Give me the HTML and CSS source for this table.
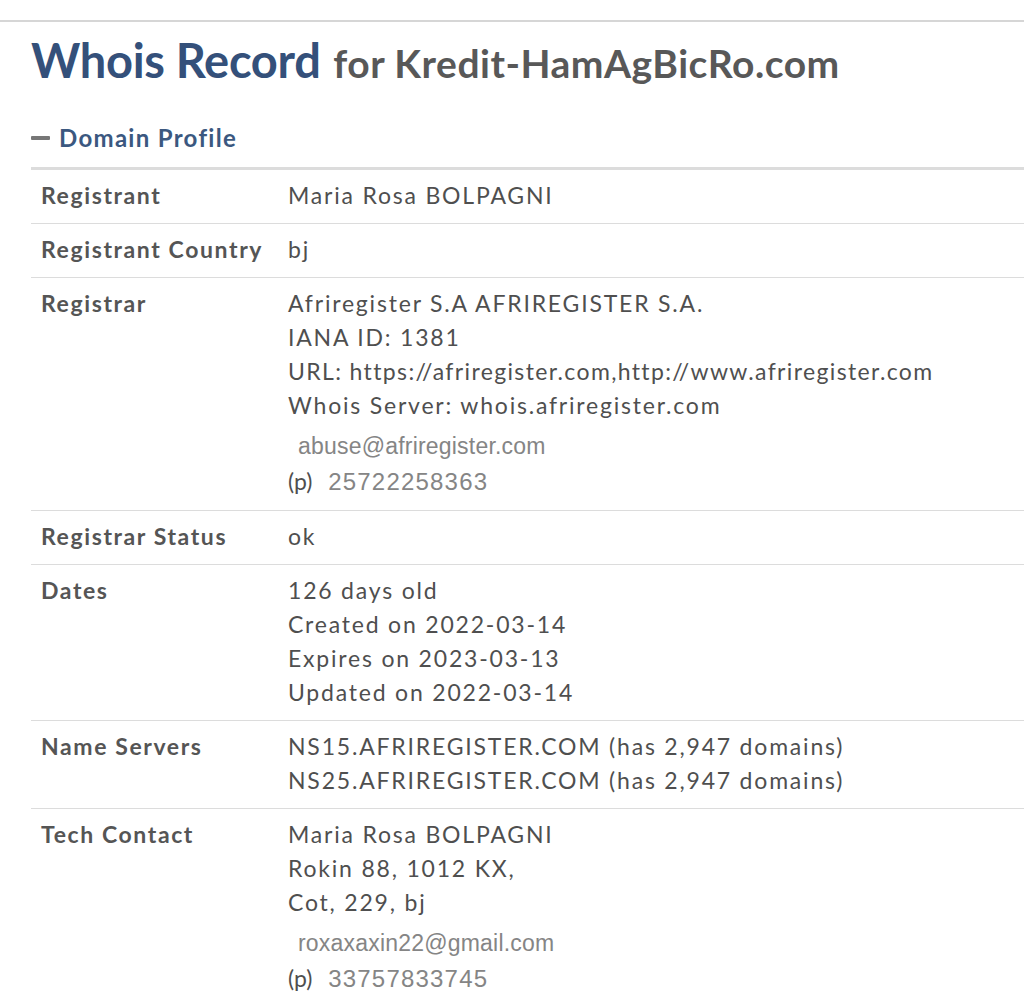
FILE: index.html
```html
<!DOCTYPE html>
<html>
<head>
<meta charset="utf-8">
<link rel="stylesheet" href="styles.css">
</head>
<body>
<div class="page">
  <div class="content">
    <h1 class="title"><span class="title-main">Whois Record</span> <span class="title-sub">for Kredit-HamAgBicRo.com</span></h1>
    <h2 class="section"><span class="dash"></span>Domain Profile</h2>
    <table class="profile">
      <tr><th>Registrant</th><td>Maria Rosa BOLPAGNI</td></tr>
      <tr><th>Registrant Country</th><td>bj</td></tr>
      <tr><th>Registrar</th><td>
        <div>Afriregister S.A AFRIREGISTER S.A.</div>
        <div>IANA ID: 1381</div>
        <div class="url">URL: https:<span class="slash">/</span>/afriregister.com,http:<span class="slash">/</span>/www.afriregister.com</div>
        <div>Whois Server: whois.afriregister.com</div>
        <div class="email">abuse@afriregister.com</div>
        <div class="phone">(p) <span class="img-text">25722258363</span></div>
      </td></tr>
      <tr><th>Registrar Status</th><td>ok</td></tr>
      <tr><th>Dates</th><td>
        <div>126 days old</div>
        <div>Created on 2022-03-14</div>
        <div>Expires on 2023-03-13</div>
        <div>Updated on 2022-03-14</div>
      </td></tr>
      <tr><th>Name Servers</th><td>
        <div>NS15.AFRIREGISTER.COM (has 2,947 domains)</div>
        <div>NS25.AFRIREGISTER.COM (has 2,947 domains)</div>
      </td></tr>
      <tr><th>Tech Contact</th><td>
        <div>Maria Rosa BOLPAGNI</div>
        <div>Rokin 88, 1012 KX,</div>
        <div>Cot, 229, bj</div>
        <div class="email">roxaxaxin22@gmail.com</div>
        <div class="phone">(p) <span class="img-text">33757833745</span></div>
      </td></tr>
    </table>
  </div>
</div>
</body>
</html>
```
FILE: styles.css
```css
* { box-sizing: border-box; }
html, body { margin: 0; padding: 0; background: #fff; }
body { font-family: Lato, "Open Sans", sans-serif; color: #4f4f4f; overflow: hidden; }
.page { border-top: 2px solid #d6d6d6; margin-top: 20px; }
.content { padding-left: 31px; }
.title { margin: 0; padding-top: 11px; font-weight: 700; line-height: 54px; white-space: nowrap; }
.title-main { font-size: 47px; color: #34507a; letter-spacing: -0.3px; }
.title-sub { font-size: 39px; color: #585858; letter-spacing: 0.5px; margin-left: 5px; }
.section { margin: 0; margin-top: 30px; font-size: 24px; font-weight: 700; color: #3b5880; letter-spacing: 1.3px; line-height: 30px; display: flex; align-items: center; }
.dash { display: inline-block; width: 19px; height: 4px; background: #777; margin-right: 9px; border-radius: 1px; }
.profile { margin-top: 14px; border-collapse: collapse; border-top: 3px solid #dcdcdc; width: calc(100% + 10px); }
.profile tr { border-bottom: 1px solid #dcdcdc; }
.profile th, .profile td { text-align: left; vertical-align: top; padding: 8px 0 11px 10px; font-size: 23px; line-height: 34px; letter-spacing: 1.8px; }
.profile th { width: 257px; font-weight: 700; color: #555; white-space: nowrap; letter-spacing: 1.6px; }
.profile td { font-weight: 400; color: #4f4f4f; padding-left: 0; white-space: nowrap; }
.url { letter-spacing: 1.36px; }
.slash { letter-spacing: -4px; }
.email { font-family: "Liberation Sans", Arial, sans-serif; font-size: 23px; letter-spacing: 0.2px; color: #858585; line-height: 36px; padding-left: 10px; padding-top: 6px; }
.phone { line-height: 35px; letter-spacing: 0; }
.img-text { font-family: "Liberation Sans", Arial, sans-serif; font-size: 24px; color: #858585; letter-spacing: 1.2px; margin-left: 10px; }
```
